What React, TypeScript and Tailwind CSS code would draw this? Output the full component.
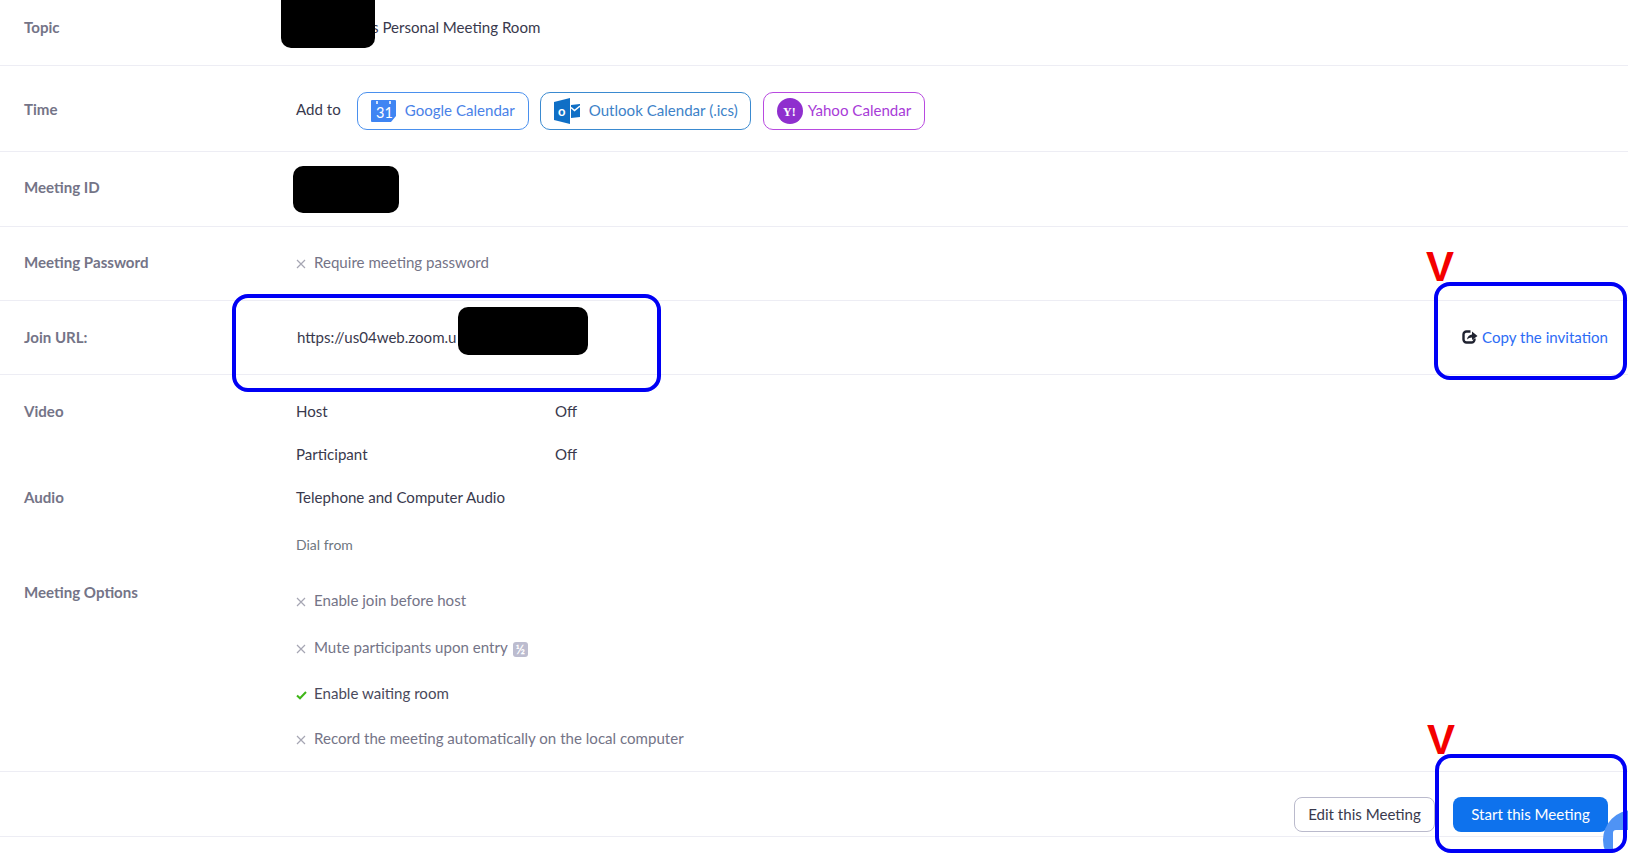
const Cross = () => (
  <svg width="10" height="10" viewBox="0 0 10 10" className="mr-2 mt-[3px] shrink-0" fill="none" stroke="#a6a6b3" strokeWidth="1.2">
    <path d="M1 1l8 8M9 1l-8 8" />
  </svg>
);

const Check = () => (
  <svg width="11" height="10" viewBox="0 0 11 10" className="mr-[7px] mt-[3px] shrink-0" fill="none" stroke="#3fb618" strokeWidth="2">
    <path d="M1 5.500l3 2.800L10 2" />
  </svg>
);

const Google = () => (
  <svg width="25" height="22" viewBox="0 0 25 22" className="shrink-0">
    <path d="M0 1a1 1 0 0 1 1-1h23a1 1 0 0 1 1 1v15l-5 6H1a1 1 0 0 1-1-1z" fill="#3f85f3" />
    <rect x="5" y="1" width="2" height="3" fill="#cfe0fb" />
    <rect x="18" y="1" width="2" height="3" fill="#cfe0fb" />
    <text x="5" y="18" fontSize="14.500" fontWeight="400" fill="#fff" fontFamily="Lato, sans-serif">31</text>
  </svg>
);

const Outlook = () => (
  <svg width="26" height="26" viewBox="0 0 26 26" className="shrink-0">
    <path d="M0 4l16-4v26L0 22z" fill="#0f6fc6" />
    <path d="M17 7l9-1v13l-9 1z" fill="#0f6fc6" />
    <path d="M17 9.500l3.500 3L26 8" fill="none" stroke="#fff" strokeWidth="1.600" />
    <text x="4" y="18" fontSize="13" fontWeight="700" fill="#fff" fontFamily="Lato, sans-serif">o</text>
  </svg>
);

const Yahoo = () => (
  <svg width="26" height="26" viewBox="0 0 26 26" className="shrink-0">
    <circle cx="13" cy="13" r="13" fill="#8f2fce" />
    <text x="6" y="18" fontSize="12" fontWeight="700" fill="#fff" fontFamily="'Liberation Serif', serif">Y!</text>
  </svg>
);

const CopyIcon = () => (
  <svg width="16" height="16" viewBox="0 0 16 16" className="mr-[4px] shrink-0" fill="none">
    <path d="M8.500 2.500H4.500a3 3 0 0 0-3 3v5a3 3 0 0 0 3 3h5a3 3 0 0 0 3-3V9.500" stroke="#1f2230" strokeWidth="2.400" />
    <path d="M5 10.500C5.300 7.500 7.500 5.600 10 5.500V2.500L15.500 7 10 11V8.500C8 8.500 6.300 9.200 5 10.500z" fill="#1f2230" />
  </svg>
);

const Row = ({ label, children, h, cls = "", labelCls = "" }: { label: string; children?: React.ReactNode; h: string; cls?: string; labelCls?: string }) => (
  <div className={`flex items-center border-b border-[#ededf4] pl-6 ${h} ${cls}`}>
    <div className={`w-[272px] shrink-0 font-bold text-[#747487] ${labelCls}`}>{label}</div>
    {children}
  </div>
);

const Line = ({ label, children, cls }: { label?: string; children: React.ReactNode; cls: string }) => (
  <div className={`flex items-center pl-6 ${cls}`}>
    <div className="w-[272px] shrink-0 font-bold text-[#747487]">{label}</div>
    {children}
  </div>
);

const Option = ({ on, children, cls }: { on?: boolean; children: React.ReactNode; cls: string }) => (
  <div className={`flex items-center text-[#747487] ${cls}`}>
    {on ? <Check /> : <Cross />}
    <span className={on ? "text-[#4a4a5c]" : ""}>{children}</span>
  </div>
);

const CalBtn = ({ icon, label, cls }: { icon: React.ReactNode; label: string; cls: string }) => (
  <button className={`flex h-[38px] items-center whitespace-nowrap rounded-[10px] border-[1.5px] bg-white pl-[13px] ${cls}`}>
    {icon}
    <span>{label}</span>
  </button>
);

const Box = ({ cls }: { cls: string }) => <div className={`absolute rounded-[16px] border-[4px] border-[#0000f5] ${cls}`} />;
const Black = ({ cls }: { cls: string }) => <div className={`absolute rounded-[10px] bg-black ${cls}`} />;
const RedV = ({ cls }: { cls: string }) => (
  <div className={`absolute font-['Liberation_Sans',sans-serif] text-[42px] font-bold leading-none text-[#f40000] ${cls}`}>V</div>
);

export default function App() {
  return (
    <div className="relative h-[853px] w-full overflow-hidden bg-white font-['Lato',sans-serif] text-[15.08px] text-[#39394d]">
      <Row label="Topic" h="h-[66px]" cls="pb-[11px]">
        <span className="ml-[76px]">s Personal Meeting Room</span>
      </Row>
      <Row label="Time" h="h-[86px]" cls="pt-[4px]" labelCls="mb-[3px]">
        <div className="flex items-center">
          <span className="mr-[16px] mb-[2px]">Add to</span>
          <CalBtn icon={<Google />} label="Google Calendar" cls="w-[172px] gap-[9px] border-[#4a90ee] text-[#4a82e8]" />
          <div className="w-[11px]" />
          <CalBtn icon={<Outlook />} label="Outlook Calendar (.ics)" cls="w-[211px] gap-[9px] border-[#3a8ad0] text-[#3d82c8]" />
          <div className="w-[12px]" />
          <CalBtn icon={<Yahoo />} label="Yahoo Calendar" cls="w-[162px] gap-[5px] border-[#b84ae0] text-[#a83bd8]" />
        </div>
      </Row>
      <Row label="Meeting ID" h="h-[75px]" cls="pb-[4px]" />
      <Row label="Meeting Password" h="h-[74px]" cls="pb-[2px]">
        <Option cls="">Require meeting password</Option>
      </Row>
      <Row label="Join URL:" h="h-[74px]">
        <span className="pl-px">https://us04web.zoom.u</span>
        <a className="ml-auto mr-[20px] flex items-center text-[#2d6cf5]">
          <CopyIcon />
          Copy the invitation
        </a>
      </Row>

      <div className="h-[397px] border-b border-[#ededf4] pt-[15px]">
        <Line label="Video" cls="h-[43px]">
          <span className="w-[259px]">Host</span>
          <span>Off</span>
        </Line>
        <Line cls="h-[43px]">
          <span className="w-[259px]">Participant</span>
          <span>Off</span>
        </Line>
        <Line label="Audio" cls="h-[43px]">
          <span>Telephone and Computer Audio</span>
        </Line>
        <Line cls="mb-[8px] h-[50px]">
          <span className="text-[14px] text-[#6e7680]">Dial from</span>
        </Line>
        <div className="flex pl-6">
          <div className="w-[272px] shrink-0 pt-[4px] font-bold text-[#747487]">Meeting Options</div>
          <div>
            <Option cls="h-[47px]">Enable join before host</Option>
            <Option cls="h-[46px]">
              Mute participants upon entry
              <span className="ml-[5px] inline-flex h-[15px] w-[15px] items-center justify-center rounded-[3px] bg-[#bcbccf] text-[13px] font-bold leading-none text-white align-[-1px]">
                ½
              </span>
            </Option>
            <Option on cls="h-[46px]">Enable waiting room</Option>
            <Option cls="h-[45px]">Record the meeting automatically on the local computer</Option>
          </div>
        </div>
      </div>

      <div className="flex h-[65px] items-start justify-end border-b border-[#ededf4] pr-5 pt-[25px]">
        <button className="flex h-[35px] w-[141px] items-center justify-center rounded-lg border border-[#babacc] bg-white text-[#39394d]">
          Edit this Meeting
        </button>
        <button className="ml-[18px] flex h-[35px] w-[155px] items-center justify-center rounded-lg bg-[#0e72ed] text-white">
          Start this Meeting
        </button>
      </div>

      <Black cls="left-[281px] top-[-10px] h-[58px] w-[94px]" />
      <Black cls="left-[293px] top-[166px] h-[47px] w-[106px]" />
      <Black cls="left-[458px] top-[307px] h-[48px] w-[130px]" />

      <div className="absolute left-[1603px] top-[810px] h-[60px] w-[60px] rounded-full bg-[#4f93f5]">
        <div className="absolute left-[10px] top-[20px] h-[30px] w-[30px] rounded-[3px] bg-white" />
      </div>

      <Box cls="left-[232px] top-[294px] h-[98px] w-[429px]" />
      <Box cls="left-[1434px] top-[282px] h-[98px] w-[193px]" />
      <Box cls="left-[1435px] top-[754px] h-[99px] w-[192px]" />
      <RedV cls="left-[1426px] top-[246px]" />
      <RedV cls="left-[1427px] top-[719px]" />
    </div>
  );
}
